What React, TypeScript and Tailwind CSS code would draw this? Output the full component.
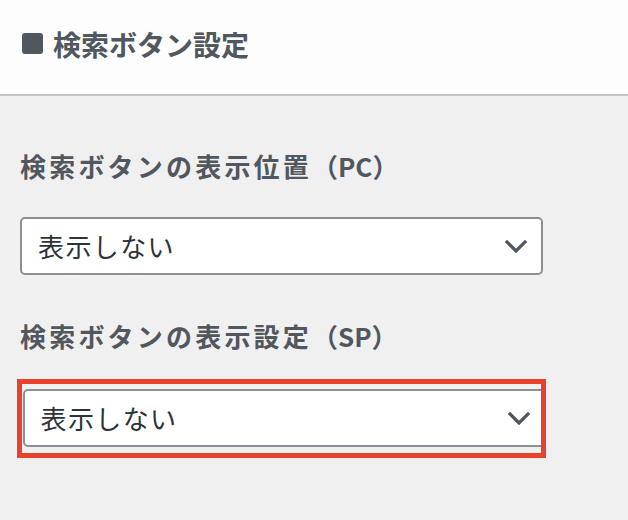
import React from "react"

function Chevron() {
	return (
		<svg width="22" height="13" viewBox="0 0 22 13" fill="none" className="shrink-0">
			<path d="M2 2l9 9 9-9" stroke="#50575e" strokeWidth="3.2" strokeLinecap="square" />
		</svg>
	)
}

function SelectBox({ value, className = "" }: { value: string; className?: string }) {
	return (
		<div
			className={
				"flex h-[58px] w-[523px] shrink-0 items-center justify-between rounded-[5px] border-2 border-[#8c8f94] bg-white pr-[14px] pl-[16px] " +
				className
			}
		>
			<span className="text-[26px] leading-none tracking-[1.4px] text-[#2c3338]">{value}</span>
			<Chevron />
		</div>
	)
}

function FieldLabel({ text, device, className = "" }: { text: string; device: string; className?: string }) {
	return (
		<label className={"text-[26px] leading-[30px] font-bold tracking-[3.2px] text-[#50575e] " + className}>
			{text}
			<span className="tracking-normal">（{device}）</span>
		</label>
	)
}

export default function App() {
	return (
		<div
			className="flex h-[520px] w-[628px] flex-col overflow-hidden bg-[#f0f0f1]"
			style={{ fontFamily: '"Noto Sans CJK JP", "Noto Sans", sans-serif' }}
		>
			{/* 見出し */}
			<div className="flex h-[96px] shrink-0 items-center gap-[10px] border-b-2 border-[#c3c4c7] bg-[#fdfdfd] px-[22px] pb-[7px]">
				<div className="h-[21px] w-[21px] rounded-[3px] bg-[#50575e]" />
				<h2 className="text-[28px] leading-none font-bold text-[#50575e]">検索ボタン設定</h2>
			</div>

			<div className="flex flex-col px-[20px]">
				<FieldLabel text="検索ボタンの表示位置" device="PC" className="mt-[55px]" />
				<SelectBox value="表示しない" className="mt-[36px]" />

				<FieldLabel text="検索ボタンの表示設定" device="SP" className="mt-[46px]" />
				{/* 注目枠 */}
				<div className="mt-[28px] -ml-[3px] w-[529px] overflow-hidden border-[5px] border-[#e9412c] pt-[5px] pb-[6px] pl-[0.5px]">
					<SelectBox value="表示しない" />
				</div>
			</div>
		</div>
	)
}
